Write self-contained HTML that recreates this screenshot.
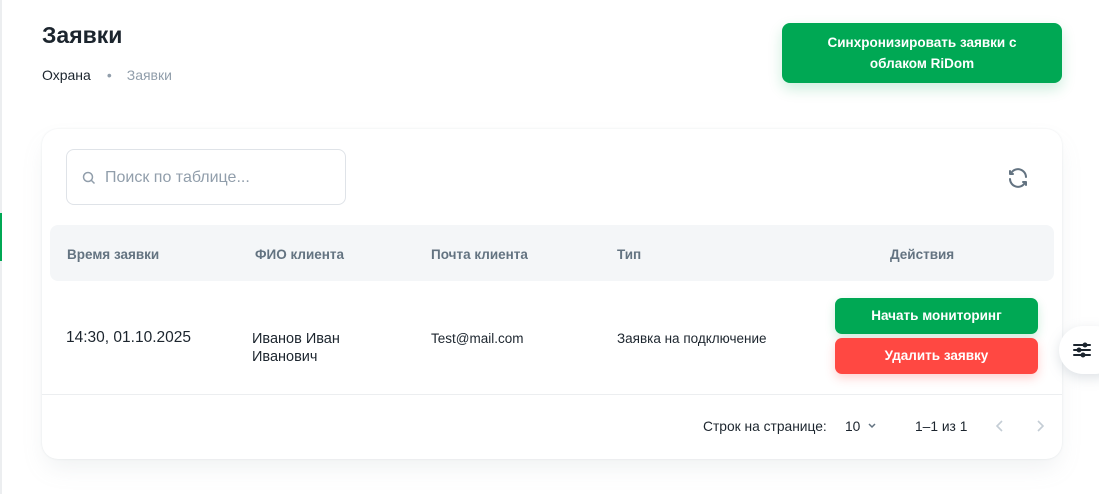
<!DOCTYPE html>
<html><head><meta charset="utf-8"><style>
*{box-sizing:border-box;margin:0;padding:0}
body{width:1099px;height:494px;background:#fff;font-family:"Liberation Sans",sans-serif;position:relative;overflow:hidden;color:#1c252e}
.abs{position:absolute}
.sb{left:0;top:0;width:2px;height:494px;background:#eceef0}
.gr{left:0;top:213px;width:2px;height:48px;background:#00a854}
h1{position:absolute;left:42px;top:22px;font-size:23px;font-weight:bold;color:#1c252e}
.bc{left:42px;top:67px;font-size:14px}
.sync{left:782px;top:23px;width:280px;height:60px;background:#00a854;border-radius:8px;color:#fff;font-weight:bold;font-size:13.5px;text-align:center;line-height:21px;padding-top:9px;box-shadow:0 6px 14px rgba(0,168,84,.2)}
.card{left:42px;top:129px;width:1020px;height:330px;border-radius:16px;background:#fff;box-shadow:0 0 2px rgba(145,158,171,.2),0 12px 24px -4px rgba(145,158,171,.15)}
.search{left:66px;top:149px;width:280px;height:56px;border:1px solid #dfe3e8;border-radius:8px}
.head{left:50px;top:225px;width:1004px;height:56px;background:#f4f6f8;border-radius:8px}
.th{top:247px;font-size:13.5px;font-weight:bold;color:#637381}
.td{font-size:13.5px;color:#1c252e}
.btn{left:835px;width:203px;height:36px;border-radius:7px;color:#fff;font-weight:bold;font-size:13.5px;text-align:center;line-height:36px}
.line{left:42px;top:394px;width:1020px;height:1px;background:#eceef0}
.pg{top:419px;font-size:13.8px;color:#1c252e}
.fab{left:1059px;top:326px;width:60px;height:48px;border-radius:24px;background:#fff;box-shadow:0 4px 12px rgba(145,158,171,.3)}
</style></head><body>
<div class="abs sb"></div><div class="abs gr"></div>
<h1>Заявки</h1>
<div class="abs bc">Охрана<span style="color:#919eab;margin:0 15px 0 16px">•</span><span style="color:#919eab">Заявки</span></div>
<div class="abs sync">Синхронизировать заявки с<br>облаком RiDom</div>
<div class="abs card"></div>
<div class="abs search"><svg class="abs" style="left:15px;top:21px" width="14" height="14" viewBox="0 0 14 14" fill="none" stroke="#919eab" stroke-width="1.5"><circle cx="6" cy="6" r="4.5"/><path d="M9.5 9.5L12.5 12.5"/></svg><span class="abs" style="left:38px;top:19px;font-size:16px;color:#919eab">Поиск по таблице...</span></div>
<svg class="abs" style="left:1006px;top:166px" width="24" height="24" viewBox="0 0 24 24" fill="none" stroke="#637381" stroke-width="2" stroke-linecap="round" stroke-linejoin="round"><path d="M20 11a8 8 0 0 0-14.5-4.5M4 5v3h3"/><path d="M4 13a8 8 0 0 0 14.5 4.5M20 19v-3h-3"/></svg>
<div class="abs head"></div>
<div class="abs th" style="left:67px">Время заявки</div>
<div class="abs th" style="left:255px">ФИО клиента</div>
<div class="abs th" style="left:431px">Почта клиента</div>
<div class="abs th" style="left:617px">Тип</div>
<div class="abs th" style="left:890px">Действия</div>
<div class="abs td" style="left:66px;top:329px;font-size:15.5px">14:30, 01.10.2025</div>
<div class="abs td" style="left:252px;top:330px;font-size:14.5px;line-height:18px">Иванов Иван<br>Иванович</div>
<div class="abs td" style="left:431px;top:331px">Test@mail.com</div>
<div class="abs td" style="left:617px;top:331px">Заявка на подключение</div>
<div class="abs btn" style="top:298px;background:#00a854;box-shadow:0 4px 10px rgba(0,168,84,.2)">Начать мониторинг</div>
<div class="abs btn" style="top:338px;background:#ff4842;box-shadow:0 4px 10px rgba(255,72,66,.25)">Удалить заявку</div>
<div class="abs line"></div>
<div class="abs pg" style="left:703px">Строк на странице:</div>
<div class="abs pg" style="left:845px">10</div>
<svg class="abs" style="left:867px;top:422px" width="10" height="8" viewBox="0 0 10 8" fill="none" stroke="#637381" stroke-width="1.5"><path d="M2 2l3 3 3-3"/></svg>
<div class="abs pg" style="left:915px">1–1 из 1</div>
<svg class="abs" style="left:994px;top:419px" width="12" height="14" viewBox="0 0 12 14" fill="none" stroke="#c4cdd5" stroke-width="1.6"><path d="M8 2L3 7l5 5"/></svg>
<svg class="abs" style="left:1034px;top:419px" width="12" height="14" viewBox="0 0 12 14" fill="none" stroke="#c4cdd5" stroke-width="1.6"><path d="M4 2l5 5-5 5"/></svg>
<div class="abs fab"><svg class="abs" style="left:14px;top:16px" width="18" height="16" viewBox="0 0 18 16" fill="none" stroke="#1c252e" stroke-width="2" stroke-linecap="round"><path d="M1 3h16M1 8h16M1 13h16"/><circle cx="12" cy="3" r="1.5" fill="#1c252e"/><circle cx="6" cy="8" r="1.5" fill="#1c252e"/><circle cx="10" cy="13" r="1.5" fill="#1c252e"/></svg></div>
</body></html>
